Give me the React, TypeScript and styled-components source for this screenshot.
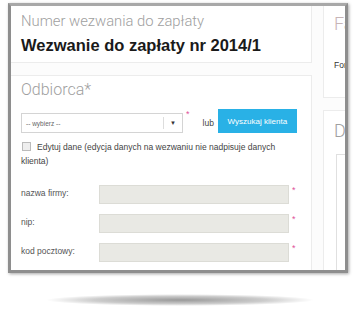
import React from 'react';
import styled, { createGlobalStyle } from 'styled-components';

const GlobalStyle = createGlobalStyle`
  html, body {
    margin: 0;
    padding: 0;
    background: #fff;
    font-family: "Liberation Sans", Arial, sans-serif;
  }
`;

const Page = styled.div`
  width: 355px;
  height: 310px;
  padding: 3px 0 0 8px;
  box-sizing: border-box;
  overflow: hidden;
`;

const Frame = styled.div`
  width: 340px;
  height: 270px;
  box-sizing: border-box;
  border: 3px solid #8e8e8e;
  border-top-color: #a8a8a8;
  box-shadow: 1px 1px 3px rgba(0, 0, 0, 0.35);
  background: #fcfcfc;
  overflow: hidden;
  display: flex;
  align-items: flex-start;
`;

const FloorShadow = styled.div`
  width: 270px;
  height: 12px;
  margin: 21px 0 0 37px;
  border-radius: 50%;
  background: radial-gradient(ellipse at center, rgba(0, 0, 0, 0.4) 0%, rgba(0, 0, 0, 0.2) 45%, rgba(0, 0, 0, 0) 70%);
`;

const Column = styled.div<{ width: number; offset: number }>`
  flex: 0 0 ${p => p.width}px;
  margin-left: ${p => p.offset}px;
  margin-top: -4px;
  display: flex;
  flex-direction: column;
  gap: 12px;
`;

const Card = styled.div<{ height: number; top: number }>`
  background: #fff;
  border: 1px solid #ececec;
  box-sizing: border-box;
  padding: ${p => p.top}px 10px 0;
  height: ${p => p.height}px;
`;

const LightHeading = styled.div<{ size: number; tint?: string }>`
  font-family: Roboto, "Liberation Sans", sans-serif;
  font-weight: 300;
  font-size: ${p => p.size}px;
  line-height: 20px;
  color: ${p => p.tint || '#a0a0a0'};
  white-space: nowrap;
`;

const Title = styled.div`
  font-weight: bold;
  font-size: 16.5px;
  line-height: 20px;
  color: #1a1a1a;
  margin-top: 4px;
  white-space: nowrap;
`;

const Required = styled.span<{ gap?: number }>`
  color: #e0509a;
  font-size: 9px;
  align-self: flex-start;
  margin-left: ${p => p.gap || 0}px;
`;

const SelectRow = styled.div`
  display: flex;
  align-items: flex-end;
  margin-top: 9px;
`;

const SelectBox = styled.div`
  width: 162px;
  height: 20px;
  box-sizing: border-box;
  border: 1px solid #d4d4d4;
  background: #fff;
  display: flex;
  align-items: center;
  font-size: 6.5px;
  color: #666;
`;

const SelectText = styled.span`
  flex: 1;
  padding-left: 4px;
`;

const SelectArrow = styled.span`
  width: 18px;
  height: 12px;
  border-left: 1px solid #ddd;
  display: flex;
  align-items: center;
  justify-content: center;
  font-size: 6px;
  color: #333;
`;

const Or = styled.span`
  font-size: 8.5px;
  color: #444;
  margin: 0 4px 5px 13px;
`;

const SearchButton = styled.button`
  width: 79px;
  height: 24px;
  border: none;
  background: #29b1e6;
  color: #fff;
  font-family: "Liberation Sans", Arial, sans-serif;
  font-size: 8px;
  padding: 0;
  cursor: pointer;
`;

const CheckRow = styled.label`
  display: block;
  width: 276px;
  margin-top: 7px;
  font-size: 8.5px;
  line-height: 14px;
  color: #444;
`;

const CheckBox = styled.span`
  display: inline-block;
  width: 7px;
  height: 7px;
  border: 1px solid #bbb;
  background: #eee;
  margin: 0 6px 0 1px;
  vertical-align: -1px;
`;

const FormRows = styled.div`
  display: flex;
  flex-direction: column;
  gap: 10px;
  margin-top: 17px;
`;

const FieldRow = styled.div`
  display: flex;
  align-items: center;
`;

const FieldLabel = styled.span`
  width: 78px;
  font-size: 8.5px;
  color: #555;
  margin-top: -3px;
`;

const FieldInput = styled.div`
  width: 190px;
  height: 19px;
  box-sizing: border-box;
  border: 1px solid #dcdcd6;
  background: #e9e9e4;
  margin-right: 3px;
`;

const SmallText = styled.div`
  font-size: 8.5px;
  color: #333;
  margin-top: 26px;
  white-space: nowrap;
`;

const InnerBox = styled.div`
  height: 140px;
  border: 1px solid #e0e0e0;
  margin: 13px 0 0 2px;
`;

const FIELDS = ['nazwa firmy:', 'nip:', 'kod pocztowy:'];

export default function App() {
  return (
    <Page>
      <GlobalStyle />
      <Frame>
        <Column width={302} offset={-1}>
          <Card height={61} top={8}>
            <LightHeading size={14.8}>Numer wezwania do zapłaty</LightHeading>
            <Title>Wezwanie do zapłaty nr 2014/1</Title>
          </Card>
          <Card height={220} top={4}>
            <LightHeading size={16}>Odbiorca*</LightHeading>
            <SelectRow>
              <SelectBox>
                <SelectText>-- wybierz --</SelectText>
                <SelectArrow>▼</SelectArrow>
              </SelectBox>
              <Required gap={3}>*</Required>
              <Or>lub</Or>
              <SearchButton>Wyszukaj klienta</SearchButton>
            </SelectRow>
            <CheckRow>
              <CheckBox />
              Edytuj dane (edycja danych na wezwaniu nie nadpisuje danych klienta)
            </CheckRow>
            <FormRows>
              {FIELDS.map(f => (
                <FieldRow key={f}>
                  <FieldLabel>{f}</FieldLabel>
                  <FieldInput />
                  <Required>*</Required>
                </FieldRow>
              ))}
            </FormRows>
          </Card>
        </Column>
        <Column width={120} offset={11}>
          <Card height={96} top={11}>
            <LightHeading size={18} tint="#c7b4b6">Faktura</LightHeading>
            <SmallText>Forma płatności:</SmallText>
          </Card>
          <Card height={200} top={10}>
            <LightHeading size={18}>Dane</LightHeading>
            <InnerBox />
          </Card>
        </Column>
      </Frame>
      <FloorShadow />
    </Page>
  );
}
